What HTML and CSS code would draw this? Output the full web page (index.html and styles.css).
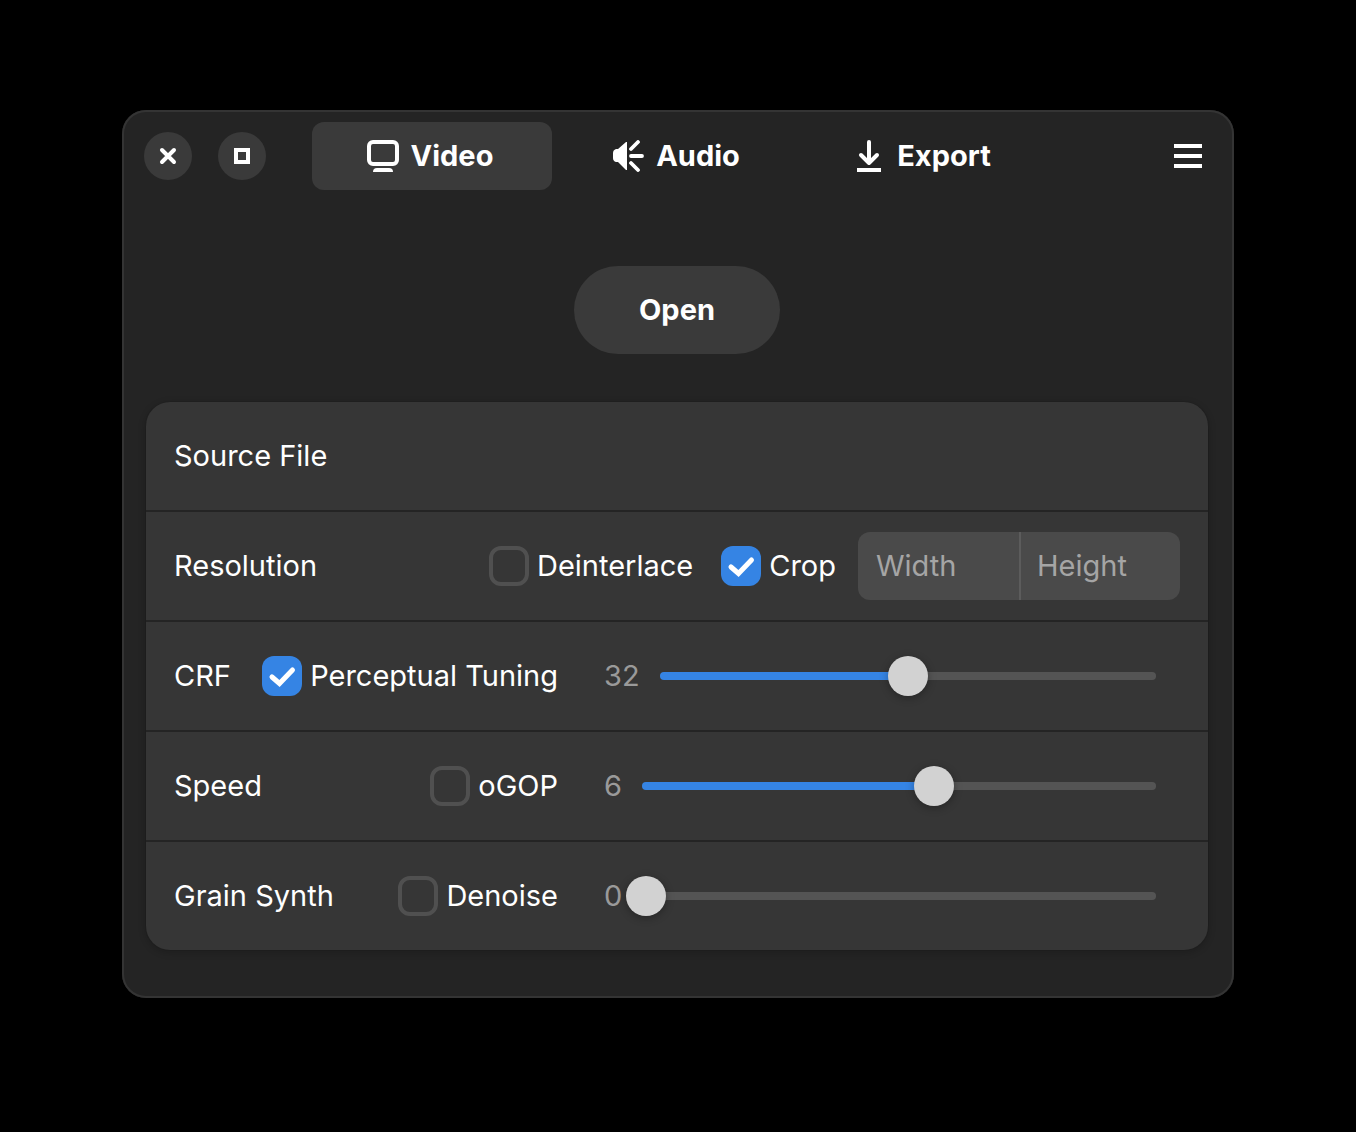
FILE: index.html
```html
<!DOCTYPE html>
<html lang="en">
<head>
<meta charset="utf-8">
<meta name="viewport" content="width=device-width, initial-scale=1">
<title>Video</title>
<link rel="stylesheet" href="styles.css">
</head>
<body>
<main class="window">
  <header class="headerbar">
    <div class="window-controls">
      <button class="round-button" type="button" aria-label="Close">
        <svg width="32" height="32" viewBox="0 0 32 32"><path d="M10 10 22 22M22 10 10 22" fill="none" stroke="currentColor" stroke-width="4" stroke-linecap="round"/></svg>
      </button>
      <button class="round-button" type="button" aria-label="Maximize">
        <svg width="32" height="32" viewBox="0 0 32 32"><path d="M10 10H22V22H10Z" fill="none" stroke="currentColor" stroke-width="4"/></svg>
      </button>
    </div>
    <nav class="tabs">
      <button class="tab tab-active" type="button">
        <svg width="32" height="32" viewBox="0 0 32 32"><rect x="2" y="2" width="28" height="22" rx="4" fill="none" stroke="currentColor" stroke-width="4"/><path d="M6 32Q6 28 10 28H22Q26 28 26 32Z" fill="currentColor"/></svg>
        <span>Video</span>
      </button>
      <button class="tab" type="button">
        <svg width="32" height="32" viewBox="0 0 32 32"><path d="M15 2V30H14L6 22H4Q1 21 1 18V13Q1 10 4 9H6L14 2Z" fill="currentColor"/><path d="M19 9 26 2M19 16H30M19 23 26 30" fill="none" stroke="currentColor" stroke-width="3.800" stroke-linecap="round"/></svg>
        <span>Audio</span>
      </button>
      <button class="tab" type="button">
        <svg width="32" height="32" viewBox="0 0 32 32"><path d="M16 2V23M8 15 16 23 24 15" fill="none" stroke="currentColor" stroke-width="4" stroke-linecap="round" stroke-linejoin="round"/><path d="M4 28H28V32H4Z" fill="currentColor"/></svg>
        <span>Export</span>
      </button>
    </nav>
    <button class="menu-button" type="button" aria-label="Main menu">
      <svg width="32" height="32" viewBox="0 0 32 32"><path d="M2 4H30V8H2ZM2 14H30V18H2ZM2 24H30V28H2Z" fill="currentColor"/></svg>
    </button>
  </header>

  <button class="open-button" type="button">Open</button>

  <section class="card">
    <div class="row">
      <span class="title">Source File</span>
    </div>
    <div class="row">
      <span class="title">Resolution</span>
      <div class="crop-group">
        <label class="check"><input type="checkbox"><span>Deinterlace</span></label>
        <label class="check"><input type="checkbox" checked><span>Crop</span></label>
      </div>
      <div class="size-fields">
        <input type="text" placeholder="Width" aria-label="Width">
        <input type="text" placeholder="Height" aria-label="Height">
      </div>
    </div>
    <div class="row">
      <label class="title" for="crf">CRF</label>
      <label class="check"><input type="checkbox" checked><span>Perceptual Tuning</span></label>
      <div class="scale">
        <output for="crf">32</output>
        <div class="slider" style="--fill: 50%">
          <span class="rail"></span>
          <input id="crf" type="range" min="0" max="64" value="32">
        </div>
      </div>
    </div>
    <div class="row">
      <label class="title" for="speed">Speed</label>
      <label class="check"><input type="checkbox"><span>oGOP</span></label>
      <div class="scale">
        <output for="speed">6</output>
        <div class="slider" style="--fill: 57%">
          <span class="rail"></span>
          <input id="speed" type="range" min="0" max="10" step="0.1" value="5.7">
        </div>
      </div>
    </div>
    <div class="row">
      <label class="title" for="grain">Grain Synth</label>
      <label class="check"><input type="checkbox"><span>Denoise</span></label>
      <div class="scale">
        <output for="grain">0</output>
        <div class="slider" style="--fill: 0%">
          <span class="rail"></span>
          <input id="grain" type="range" min="0" max="50" value="0">
        </div>
      </div>
    </div>
  </section>
</main>
</body>
</html>
```
FILE: styles.css
```css
* {
  box-sizing: border-box;
}

body {
  margin: 0;
  padding: 110px 24px;
  background: #000;
  color: #fff;
  font: 400 29px/36px Inter, sans-serif;
  font-optical-sizing: none;
}

button,
input {
  margin: 0;
  border: 0;
  color: inherit;
  font: inherit;
  font-optical-sizing: none;
}

button {
  display: flex;
  align-items: center;
  justify-content: center;
  padding: 0;
  background: none;
  font-weight: 700;
}

svg {
  display: block;
  flex: none;
}

.window {
  display: flex;
  flex-direction: column;
  max-width: 1112px;
  margin: 0 auto;
  padding: 0 26px 48px 24px;
  border-radius: 24px;
  background: #242424;
  box-shadow: inset 0 0 0 2px #343434;
}

.headerbar {
  display: grid;
  grid-template-columns: 1fr auto 1fr;
  align-items: center;
  height: 92px;
  margin: 0 -14px 0 -2px;
}

.window-controls {
  display: flex;
  gap: 26px;
}

.round-button {
  width: 48px;
  height: 48px;
  border-radius: 50%;
  background: #3a3a3a;
}

.tabs {
  display: flex;
  gap: 6px;
  margin-left: -10px;
}

.tab {
  gap: 12px;
  width: 240px;
  height: 68px;
  padding-right: 4px;
  border-radius: 12px;
}

.tab-active {
  background: #3a3a3a;
}

.menu-button {
  justify-self: end;
  width: 68px;
  height: 68px;
  border-radius: 12px;
}

.open-button {
  align-self: center;
  height: 88px;
  margin: 64px 0 48px;
  padding: 0 65px;
  border-radius: 44px;
  background: #3a3a3a;
}

.card {
  border-radius: 24px;
  background: #363636;
  box-shadow: 0 2px 6px 2px rgb(0 0 0 / 14%), 0 0 0 1px rgb(0 0 0 / 6%);
}

.row {
  display: flex;
  align-items: center;
  height: 108px;
  padding: 0 28px;
}

.row + .row {
  height: 110px;
  border-top: 2px solid #242424;
}

.title {
  flex: 1;
}

.crop-group {
  display: flex;
  gap: 28px;
}

.check {
  display: flex;
  align-items: center;
  gap: 8px;
}

.check input {
  appearance: none;
  width: 40px;
  height: 40px;
  border: 4px solid #505050;
  border-radius: 12px;
}

.check input:checked {
  border: 0;
  background: #3584e4 url("data:image/svg+xml,%3Csvg xmlns='http://www.w3.org/2000/svg' viewBox='0 0 40 40'%3E%3Cpath d='M10 21 17.500 27.500 30.500 14' fill='none' stroke='white' stroke-width='5' stroke-linecap='round'/%3E%3C/svg%3E");
}

.size-fields {
  display: flex;
  width: 322px;
  height: 68px;
  margin-left: 22px;
  border-radius: 12px;
  background: #4a4a4a;
}

.size-fields input {
  width: 50%;
  padding: 0 18px;
  background: none;
}

.size-fields input + input {
  padding: 0 16px;
  border-left: 2px solid #5c5c5c;
}

.size-fields input::placeholder {
  color: #a5a5a5;
}

.scale {
  display: flex;
  align-items: center;
  flex: 0 1 576px;
  gap: 4px;
  margin-left: 46px;
  padding-right: 8px;
}

.scale output {
  color: #9a9a9a;
}

.slider {
  display: grid;
  flex: 1;
  align-items: center;
}

.slider > * {
  grid-area: 1 / 1;
}

.rail {
  height: 8px;
  margin: 0 16px;
  border-radius: 4px;
  background: linear-gradient(to right, #3584e4 var(--fill), #545454 var(--fill));
}

.slider input {
  appearance: none;
  width: 100%;
  height: 40px;
  background: none;
}

.slider input::-webkit-slider-thumb {
  appearance: none;
  width: 40px;
  height: 40px;
  border-radius: 50%;
  background: #d2d2d2;
  box-shadow: 0 2px 8px rgb(0 0 0 / 30%);
}
```
